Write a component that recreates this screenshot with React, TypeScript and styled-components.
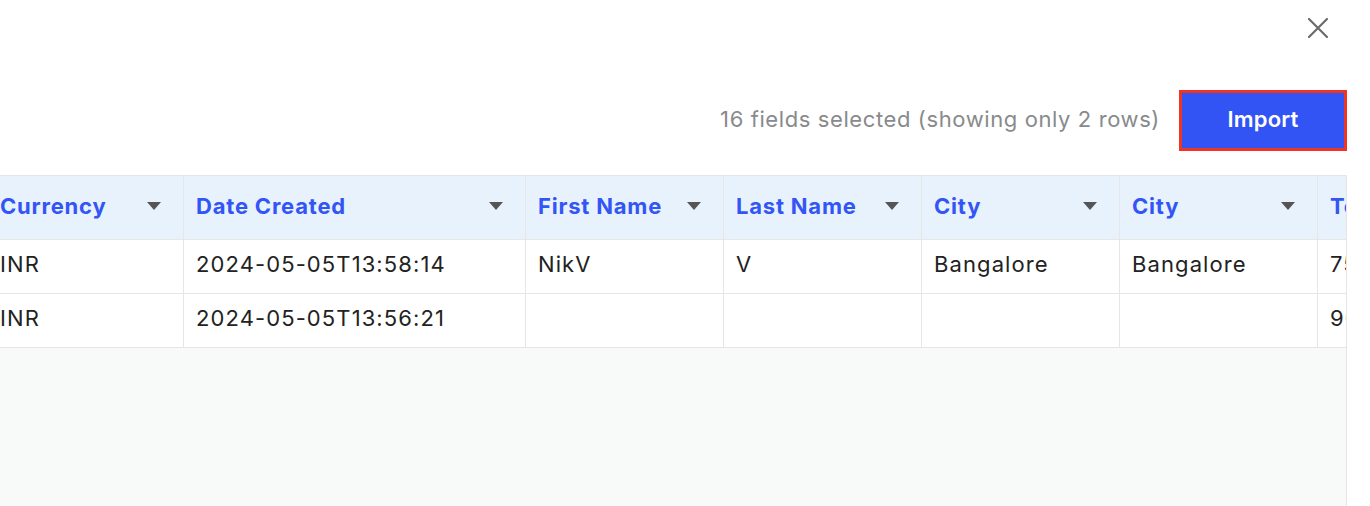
import React, { useEffect, useRef } from "react";
import styled, { createGlobalStyle } from "styled-components";

const Global = createGlobalStyle`
  html, body { margin: 0; padding: 0; background: #ffffff; overflow: hidden; }
  body { font-family: "Inter", "Noto Sans", sans-serif; }
`;

const Dialog = styled.div`
  display: flex;
  flex-direction: column;
  width: 1370px;
  height: 506px;
  overflow: hidden;
  background: #fff;
`;

const TopBar = styled.div`
  display: flex;
  justify-content: flex-end;
  padding: 14px 38px 0 0;
  height: 32px;
`;

const CloseButton = styled.button`
  border: none;
  background: transparent;
  padding: 0;
  width: 28px;
  height: 28px;
  display: flex;
  align-items: center;
  justify-content: center;
  cursor: pointer;
`;

const Toolbar = styled.div`
  display: flex;
  justify-content: flex-end;
  align-items: center;
  gap: 19px;
  padding: 44px 23px 0 0;
  height: 61px;
`;

const Summary = styled.span`
  font-size: 22px;
  color: #888a8c;
  letter-spacing: 0.6px;
  padding-bottom: 3px;
`;

const ImportButton = styled.button`
  width: 168px;
  height: 61px;
  box-sizing: border-box;
  background: #3354f4;
  color: #fff;
  font-family: inherit;
  font-size: 22px;
  font-weight: 600;
  letter-spacing: 0.2px;
  border: 3px solid #ee3524;
  border-radius: 0;
  padding-bottom: 4px;
  cursor: pointer;
`;

const TableFrame = styled.div`
  margin: 24px 23px 0 0;
  flex: 1;
  border-top: 1px solid #e6e6e6;
  border-right: 1px solid #e6e6e6;
  background: #f8f9f9;
  overflow-x: auto;
  overflow-y: hidden;
  scrollbar-width: none;
  &::-webkit-scrollbar { display: none; }
`;

const Grid = styled.div<{ $cols: string }>`
  display: grid;
  grid-template-columns: ${(p) => p.$cols};
  width: max-content;
`;

const HeadCell = styled.div`
  height: 64px;
  box-sizing: border-box;
  background: #e7f2fd;
  border-right: 1px solid #e6e6e6;
  border-bottom: 1px solid #e6e6e6;
  display: flex;
  align-items: center;
  justify-content: space-between;
  padding: 0 21px 3px 12px;
  font-size: 22px;
  font-weight: 700;
  letter-spacing: 0.8px;
  color: #3355f5;
  white-space: nowrap;
`;

const Cell = styled.div`
  height: 54px;
  box-sizing: border-box;
  background: #fff;
  border-right: 1px solid #e6e6e6;
  border-bottom: 1px solid #e6e6e6;
  display: flex;
  align-items: center;
  padding: 0 12px 5px;
  font-size: 22px;
  letter-spacing: 1.1px;
  color: #222;
  white-space: nowrap;
  overflow: hidden;
`;

const Caret = () => (
  <svg width="16" height="10" viewBox="0 0 16 10">
    <path d="M1 1 H15 L8 9 Z" fill="#555" />
  </svg>
);

const columns = [
  { name: "Currency", width: 196 },
  { name: "Date Created", width: 342 },
  { name: "First Name", width: 198 },
  { name: "Last Name", width: 198 },
  { name: "City", width: 198 },
  { name: "City", width: 198 },
  { name: "Total", width: 198 },
];

const rows = [
  ["INR", "2024-05-05T13:58:14", "NikV", "V", "Bangalore", "Bangalore", "7500"],
  ["INR", "2024-05-05T13:56:21", "", "", "", "", "9000"],
];

export default function App() {
  const ref = useRef<HTMLDivElement>(null);
  useEffect(() => {
    if (ref.current) ref.current.scrollLeft = 12;
  }, []);
  return (
    <Dialog>
      <Global />
      <TopBar>
        <CloseButton aria-label="Close">
          <svg width="24" height="24" viewBox="0 0 24 24">
            <path d="M3 3 L21 21 M21 3 L3 21" stroke="#6b6b6b" strokeWidth="2.2" strokeLinecap="round" />
          </svg>
        </CloseButton>
      </TopBar>
      <Toolbar>
        <Summary>16 fields selected (showing only 2 rows)</Summary>
        <ImportButton>Import</ImportButton>
      </Toolbar>
      <TableFrame ref={ref}>
        <Grid $cols={columns.map((c) => `${c.width}px`).join(" ")}>
          {columns.map((c, i) => (
            <HeadCell key={i}>
              <span>{c.name}</span>
              <Caret />
            </HeadCell>
          ))}
          {rows.map((r, ri) =>
            r.map((v, ci) => <Cell key={`${ri}-${ci}`}>{v}</Cell>)
          )}
        </Grid>
      </TableFrame>
    </Dialog>
  );
}
